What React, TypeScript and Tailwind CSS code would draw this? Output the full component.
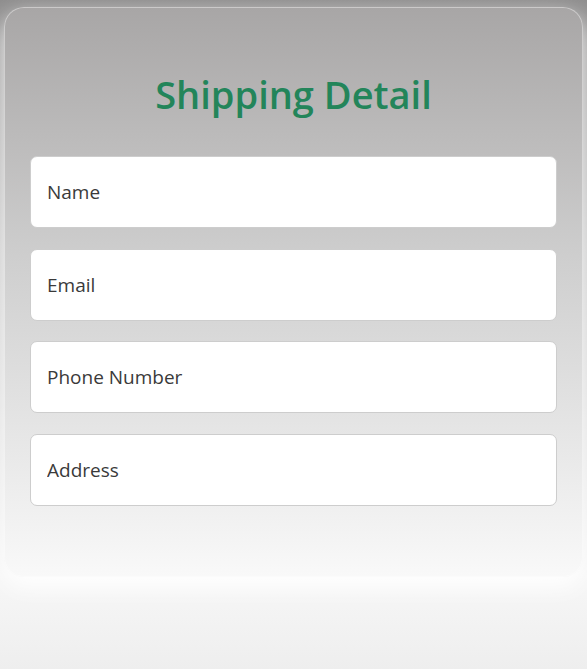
const fields = ["Name", "Email", "Phone Number", "Address"];

const App = () => {
  return (
    <div className="min-h-[669px] bg-[linear-gradient(to_bottom,#8e8d8d_0%,#c6c6c6_38%,#f7f7f7_86%,#eeeeee_100%)] px-[4px] pt-[7px] font-['Open_Sans',sans-serif]">
      <div className="h-[570px] rounded-[20px] border border-white/40 bg-[linear-gradient(to_bottom,#a8a6a6_0%,#cfcfcf_45%,#f9f9f9_100%)] bg-origin-border px-[25px] pt-[62px] shadow-[0_10px_24px_rgba(255,255,255,0.95)]">
        <h1 className="mb-[38px] text-center text-[38px] leading-[48px] font-semibold text-[#23855a]">
          Shipping Detail
        </h1>
        <div className="flex flex-col gap-[20.5px]">
          {fields.map((f) => (
            <input
              key={f}
              placeholder={f}
              className="h-[72px] w-full rounded-[7px] border border-[#cdcdcd] bg-white px-[16px] text-[19px] text-[#333] outline-none placeholder:text-[#3a3a3a]"
            />
          ))}
        </div>
      </div>
    </div>
  );
};

export default App;
